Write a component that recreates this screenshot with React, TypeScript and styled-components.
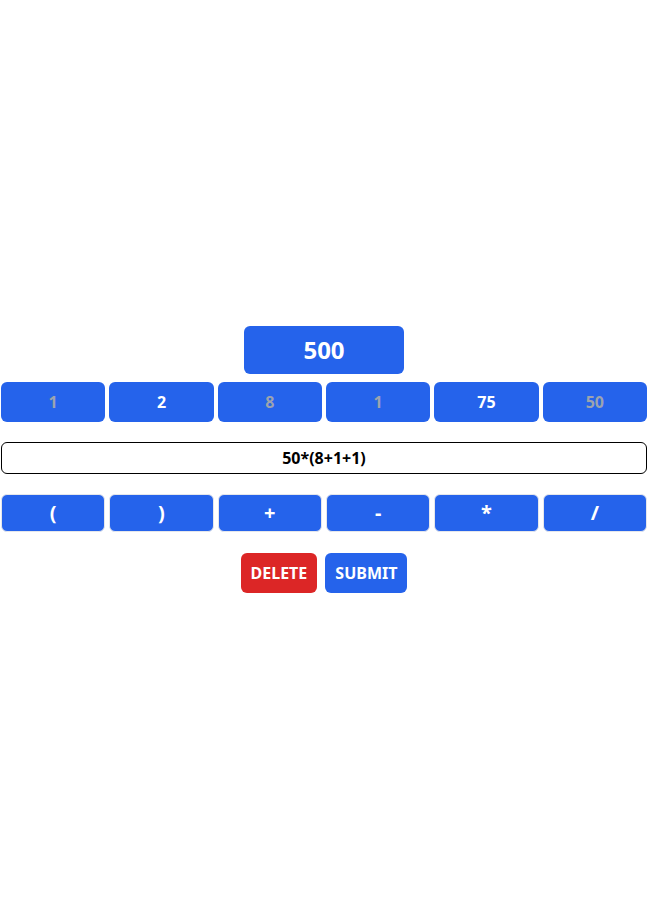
import React from "react";
import styled, { createGlobalStyle } from "styled-components";

const Global = createGlobalStyle`
  html, body { margin: 0; padding: 0; background: #fff; }
  body { font-family: "Noto Sans", "Open Sans", sans-serif; }
  * { box-sizing: border-box; }
`;

const Page = styled.main`
  min-height: 912px;
  display: flex;
  flex-direction: column;
  justify-content: center;
  align-items: center;
  padding: 6px 0 0 1px;
`;

const Target = styled.div`
  width: 160px;
  height: 48px;
  border-radius: 6px;
  background: #2563eb;
  color: #fff;
  font-size: 24px;
  font-weight: 700;
  display: flex;
  align-items: center;
  justify-content: center;
`;

const Row = styled.div<{ $top: number }>`
  width: 100%;
  display: grid;
  grid-template-columns: repeat(6, 1fr);
  gap: 4px;
  margin-top: ${(p) => p.$top}px;
`;

const NumButton = styled.button<{ $used?: boolean }>`
  height: 40px;
  border: none;
  border-radius: 6px;
  background: #2563eb;
  color: ${(p) => (p.$used ? "#9ca3af" : "#fff")};
  font-family: inherit;
  font-size: 16px;
  font-weight: 700;
  padding: 0;
`;

const OpButton = styled.button`
  height: 38px;
  border: 1px solid #e5e7eb;
  border-radius: 6px;
  background: #2563eb;
  color: #fff;
  font-family: inherit;
  font-size: 20px;
  font-weight: 700;
  padding: 0;
`;

const Expression = styled.div`
  width: 100%;
  height: 32px;
  margin-top: 20px;
  border: 1px solid #000;
  border-radius: 6px;
  display: flex;
  align-items: center;
  justify-content: center;
  font-size: 16px;
  font-weight: 700;
  color: #000;
`;

const Actions = styled.div`
  display: flex;
  gap: 8px;
  margin-top: 21px;
`;

const ActionButton = styled.button<{ $danger?: boolean }>`
  height: 40px;
  padding: 0 10px;
  border: none;
  border-radius: 6px;
  background: ${(p) => (p.$danger ? "#dc2626" : "#2563eb")};
  color: #fff;
  font-family: inherit;
  font-size: 16px;
  font-weight: 700;
`;

const numbers: { v: string; used: boolean }[] = [
  { v: "1", used: true },
  { v: "2", used: false },
  { v: "8", used: true },
  { v: "1", used: true },
  { v: "75", used: false },
  { v: "50", used: true },
];

const ops = ["(", ")", "+", "-", "*", "/"];

export default function App() {
  return (
    <>
      <Global />
      <Page>
        <Target>500</Target>
        <Row $top={8}>
          {numbers.map((n, i) => (
            <NumButton key={i} $used={n.used}>
              {n.v}
            </NumButton>
          ))}
        </Row>
        <Expression>50*(8+1+1)</Expression>
        <Row $top={20}>
          {ops.map((o) => (
            <OpButton key={o}>{o}</OpButton>
          ))}
        </Row>
        <Actions>
          <ActionButton $danger>DELETE</ActionButton>
          <ActionButton>SUBMIT</ActionButton>
        </Actions>
      </Page>
    </>
  );
}
